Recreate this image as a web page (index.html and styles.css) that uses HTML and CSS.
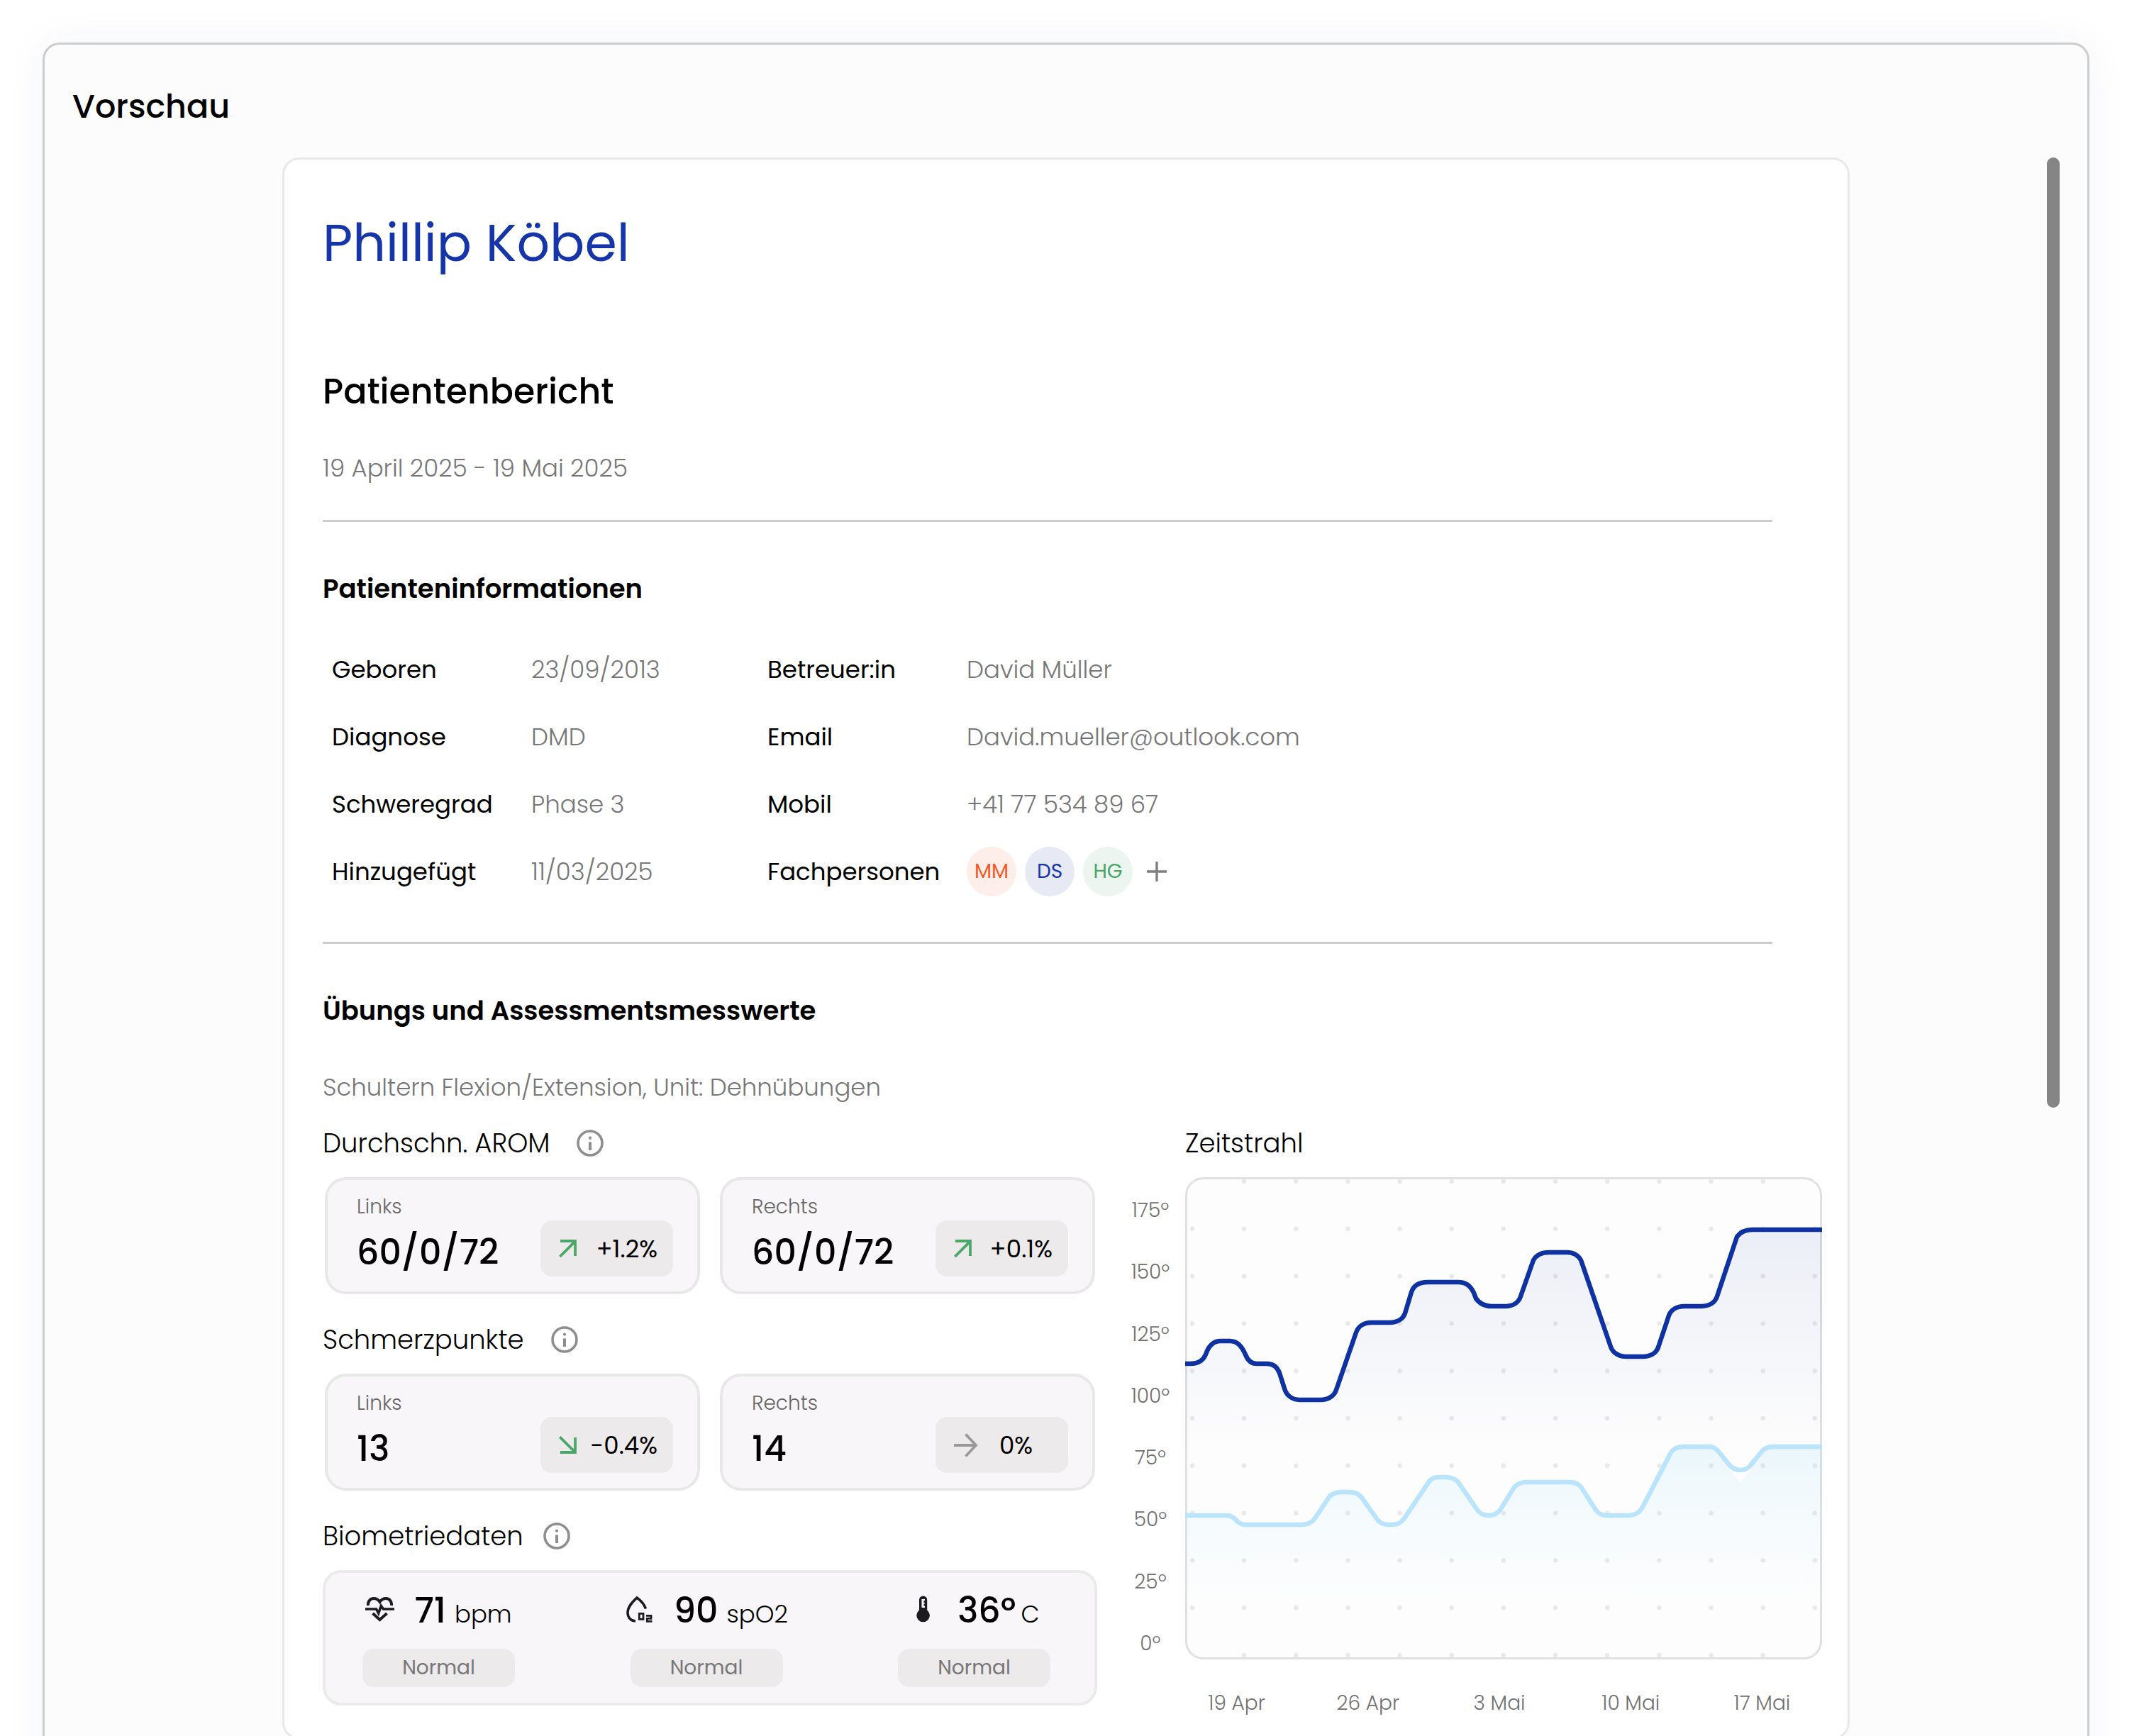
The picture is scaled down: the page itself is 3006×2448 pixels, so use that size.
FILE: index.html
```html
<!DOCTYPE html>
<html lang="de">
<head>
<meta charset="utf-8">
<meta name="viewport" content="width=device-width, initial-scale=1">
<title>Vorschau – Patientenbericht</title>
<link rel="stylesheet" href="styles.css">
</head>
<body>
<svg class="sprite" aria-hidden="true">
  <symbol id="info" viewBox="0 0 38 38"><circle cx="19" cy="19" r="17" fill="none" stroke="currentColor" stroke-width="3.6"/><circle cx="19" cy="11.7" r="2.1" fill="currentColor"/><path d="M19 17.4V29" stroke="currentColor" stroke-width="4"/></symbol>
  <symbol id="up" viewBox="0 0 25 25"><path d="M1.4 24 23 2.4M2 2H23V23" fill="none" stroke="currentColor" stroke-width="3.8"/></symbol>
  <symbol id="down" viewBox="0 0 25 25"><path d="M1.4 1.4 23 23M2 23H23V2" fill="none" stroke="currentColor" stroke-width="3.8"/></symbol>
  <symbol id="flat" viewBox="0 0 34 34"><path d="M0 17H31M16.5 1.5 31 17 16.5 32.5" fill="none" stroke="currentColor" stroke-width="3.8"/></symbol>
</svg>
<main class="frame">
  <h2 class="frame-title">Vorschau</h2>
  <div class="stage">
    <article class="paper">
      <h1 class="name">Phillip Köbel</h1>
      <h2 class="report-title">Patientenbericht</h2>
      <p class="period">19 April 2025 - 19 Mai 2025</p>
      <hr class="rule">
      <section>
        <h3 class="heading">Patienteninformationen</h3>
        <table class="facts">
          <colgroup><col class="c1"><col class="c2"><col class="c1"><col></colgroup>
          <tr><th scope="row">Geboren</th><td>23/09/2013</td><th scope="row">Betreuer:in</th><td>David Müller</td></tr>
          <tr><th scope="row">Diagnose</th><td>DMD</td><th scope="row">Email</th><td>David.mueller@outlook.com</td></tr>
          <tr><th scope="row">Schweregrad</th><td>Phase 3</td><th scope="row">Mobil</th><td>+41 77 534 89 67</td></tr>
          <tr><th scope="row">Hinzugefügt</th><td>11/03/2025</td><th scope="row">Fachpersonen</th><td>
            <div class="team">
              <span class="avatar orange">MM</span><span class="avatar blue">DS</span><span class="avatar green">HG</span>
              <button class="add" type="button" aria-label="Fachperson hinzufügen"><svg width="28" height="28" viewBox="0 0 28 28"><path d="M14 0V28M0 14H28" stroke="currentColor" stroke-width="3.4"/></svg></button>
            </div></td></tr>
        </table>
      </section>
      <hr class="rule rule-low">
      <section>
        <h3 class="heading">Übungs und Assessmentsmesswerte</h3>
        <p class="unit-line">Schultern Flexion/Extension, Unit: Dehnübungen</p>
        <div class="measures">
          <div class="groups">
            <section>
              <h4 class="group-title">Durchschn. AROM <button class="info" type="button" aria-label="Info AROM"><svg width="38" height="38"><use href="#info"/></svg></button></h4>
              <div class="cards">
                <div class="card"><div><div class="side">Links</div><div class="value">60/0/72</div></div><div class="trend"><svg class="good" width="25" height="25"><use href="#up"/></svg>+1.2%</div></div>
                <div class="card"><div><div class="side">Rechts</div><div class="value">60/0/72</div></div><div class="trend"><svg class="good" width="25" height="25"><use href="#up"/></svg>+0.1%</div></div>
              </div>
            </section>
            <section>
              <h4 class="group-title">Schmerzpunkte <button class="info" type="button" aria-label="Info Schmerzpunkte"><svg width="38" height="38"><use href="#info"/></svg></button></h4>
              <div class="cards">
                <div class="card"><div><div class="side">Links</div><div class="value">13</div></div><div class="trend"><svg class="good" width="25" height="25"><use href="#down"/></svg>-0.4%</div></div>
                <div class="card"><div><div class="side">Rechts</div><div class="value">14</div></div><div class="trend steady"><svg class="same" width="34" height="34"><use href="#flat"/></svg>0%</div></div>
              </div>
            </section>
            <section>
              <h4 class="group-title group-title-tight">Biometriedaten <button class="info" type="button" aria-label="Info Biometriedaten"><svg width="38" height="38"><use href="#info"/></svg></button></h4>
              <div class="vitals">
                <div class="vital">
                  <div class="reading">
                    <svg width="41" height="38" viewBox="0 0 41 38" fill="none" stroke="currentColor" stroke-width="4"><path d="M4 14C3.5 7.5 7.5 4 12 4 16 4 18.5 6 20.5 9 22.5 6 25 4 29 4 33.5 4 37.5 7.5 37 14"/><path d="M0 19H15.5L18.7 25 22.3 14.5 25.5 19H41" stroke-width="3.6"/><path d="M10.5 25 20.5 34 30.5 25"/></svg>
                    <span class="amount">71</span><span class="unit">bpm</span>
                  </div>
                  <div class="state">Normal</div>
                </div>
                <div class="vital">
                  <div class="reading">
                    <svg width="41" height="38" viewBox="-2 0 41 38" fill="none" stroke="currentColor" stroke-width="3.6"><path d="M27.5 18.5C25.5 12.5 20.5 7 15 3 8 9.5 2 16 2 24 2 31 6.5 35.5 13 36"/><path d="M18.3 25.3H24V33.3H18.3Z" stroke-width="2.8"/><path d="M28 28.3H35V32.3H29.3V36.3H36.5" stroke-width="2.8"/></svg>
                    <span class="amount">90</span><span class="unit">spO2</span>
                  </div>
                  <div class="state">Normal</div>
                </div>
                <div class="vital">
                  <div class="reading">
                    <svg width="41" height="38" viewBox="0 0 41 38" fill="currentColor"><path d="M15 6A5.6 5.6 0 0 1 26.2 6V20.5A9.3 9.3 0 1 1 15 20.5Z"/><path d="M18.5 5H23V7H21.5V10H23V11.5H21.5V14.5H23V17H18.5Z" fill="#f8f6f8"/></svg>
                    <span class="amount">36º</span><span class="unit near">C</span>
                  </div>
                  <div class="state">Normal</div>
                </div>
              </div>
            </section>
          </div>
          <section class="timeline">
            <h4 class="group-title chart-title">Zeitstrahl</h4>
            <div class="y-axis"><span>175º</span><span>150º</span><span>125º</span><span>100º</span><span>75º</span><span>50º</span><span>25º</span><span>0º</span></div>
            <svg class="chart" viewBox="0 0 898 680" role="img" aria-label="Zeitstrahl">
              <defs>
                <pattern id="dots" x="-26.5" y="-27.4" width="73.15" height="66.8" patternUnits="userSpaceOnUse"><circle cx="36.5" cy="33.4" r="3.2" fill="#e8e8e8"/></pattern>
                <linearGradient id="deep" gradientUnits="userSpaceOnUse" x1="0" y1="74" x2="0" y2="390"><stop offset="0" stop-color="#1535a8" stop-opacity=".075"/><stop offset="1" stop-color="#1535a8" stop-opacity="0"/></linearGradient>
                <linearGradient id="pale" gradientUnits="userSpaceOnUse" x1="0" y1="380" x2="0" y2="600"><stop offset="0" stop-color="#9adcf5" stop-opacity=".18"/><stop offset="1" stop-color="#b9e4fb" stop-opacity="0"/></linearGradient>
                <clipPath id="box"><rect width="898" height="680" rx="25"/></clipPath>
              </defs>
              <rect x="1.5" y="1.5" width="895" height="677" rx="24" fill="#fdfdfd" stroke="#e0e0e0" stroke-width="3"/>
              <g clip-path="url(#box)">
                <rect width="898" height="680" fill="url(#dots)"/>
                <path fill="url(#deep)" d="M0 263H8C20 263 26 257 29 250 33 238 40 231 50 231H63C74 231 80 239 85 250 88 258 93 263 101 263H115C124 263 130 268 133 276L140 298C143 308 151 314 162 314H191C201 314 210 309 213 300L241 219C244 210 252 205 263 205H288C299 205 307 200 310 192L319 162C322 153 330 148 342 148H385C396 148 402 153 407 163L410 171C415 178 422 182 432 182H452C462 182 470 177 473 168L491 117C495 110 503 106 513 106H538C547 106 554 110 558 117L600 239C603 248 612 253 622 253H645C656 253 664 248 667 240L682 195C685 187 693 182 704 182H728C739 182 747 177 750 168L778 84C783 77 790 74 800 74H898V400H0Z"/>
                <path fill="url(#pale)" d="M0 477H58C66 477 70 490 84 490H164C172 490 179 487 183 481L201 454C205 447 212 444 220 444H231C239 444 245 446 249 452L269 480C273 487 279 490 286 490H292C299 490 305 487 309 481L342 432C345 426 350 423 357 423H367C377 423 383 426 387 433L411 468C415 474 420 477 428 477 436 477 441 474 445 468L464 437C468 432 475 430 483 430H541C549 430 555 432 559 438L578 468C582 474 587 477 594 477H625C635 477 640 473 644 467L685 388C689 382 695 380 704 380H737C744 380 749 382 753 388L771 416 783 430 795 416 812 388C816 382 822 380 830 380H898V620H0Z"/>
                <path fill="#fdfdfd" d="M772 415H794L783 430Z"/>
                <path class="line pale" d="M0 477H58C66 477 69 481 72 484 75 487 79 490 84 490H164C172 490 179 487 183 481L201 454C205 447 212 444 220 444H231C239 444 245 446 249 452L269 480C273 487 279 490 286 490H292C299 490 305 487 309 481L342 432C345 426 350 423 357 423H367C377 423 383 426 387 433L411 468C415 474 420 477 428 477 436 477 441 474 445 468L464 437C468 432 475 430 483 430H541C549 430 555 432 559 438L578 468C582 474 587 477 594 477H625C635 477 640 473 644 467L685 388C689 382 695 380 704 380H737C744 380 749 382 753 388L765 403C770 410 776 413 783 413 790 413 795 410 799 404L812 388C816 382 822 380 830 380H898"/>
                <path class="line deep" d="M0 263H8C20 263 26 257 29 250 33 238 40 231 50 231H63C74 231 80 239 85 250 88 258 93 263 101 263H115C124 263 130 268 133 276L140 298C143 308 151 314 162 314H191C201 314 210 309 213 300L241 219C244 210 252 205 263 205H288C299 205 307 200 310 192L319 162C322 153 330 148 342 148H385C396 148 402 153 407 163L410 171C415 178 422 182 432 182H452C462 182 470 177 473 168L491 117C495 110 503 106 513 106H538C547 106 554 110 558 117L600 239C603 248 612 253 622 253H645C656 253 664 248 667 240L682 195C685 187 693 182 704 182H728C739 182 747 177 750 168L778 84C783 77 790 74 800 74H898"/>
              </g>
            </svg>
            <div class="x-axis"><span>19 Apr</span><span>26 Apr</span><span>3 Mai</span><span>10 Mai</span><span>17 Mai</span></div>
          </section>
        </div>
      </section>
    </article>
    <div class="scrollbar"></div>
  </div>
</main>
</body>
</html>
```

FILE: styles.css
```css
*, *::before, *::after { box-sizing: border-box; }

body {
  margin: 0;
  height: 100vh;
  overflow: hidden;
  padding: 60px 60px 0;
  background: #fff;
  color: #000;
  font-family: Poppins, Inter, "Open Sans", sans-serif;
  font-size: 34px;
  line-height: 48px;
}

h1, h2, h3, h4, p { margin: 0; font-weight: 400; }
button { padding: 0; border: 0; background: none; font: inherit; cursor: pointer; }
svg { display: block; flex: none; }
.sprite { position: absolute; width: 0; height: 0; }

.frame {
  padding: 57px 39px 60px;
  border: 3px solid #ccc;
  border-radius: 24px;
  background: #fcfcfc;
  box-shadow: 0 0 60px rgba(30, 50, 160, .05);
}
.frame-title { font-size: 46px; line-height: 60px; font-weight: 500; margin-bottom: 42px; }
.stage { display: grid; grid-template-columns: 1fr minmax(0, 2210px) 1fr; }
.scrollbar { justify-self: end; width: 18px; height: 1340px; border-radius: 9px; background: #858585; }

.paper {
  grid-column: 2;
  padding: 74px 36px 30px 54px;
  border: 3px solid #e8e8e8;
  border-radius: 24px;
  background: #fff;
}
.name { font-size: 73px; line-height: 88px; color: #1535a8; }
.report-title { margin-top: 135px; font-size: 49px; line-height: 60px; font-weight: 500; }
.period { margin-top: 54px; color: #777; font-weight: 300; }
.rule { margin: 49px 70px 0 0; height: 3px; border: 0; background: #ccc; }
.rule-low { margin-top: 52px; }
.heading { margin-top: 70px; font-size: 37px; font-weight: 600; }

.facts { width: 100%; margin-top: 42px; border-collapse: collapse; table-layout: fixed; }
.facts th, .facts td { height: 95px; padding: 0 0 0 13px; text-align: left; white-space: nowrap; }
.facts th { font-weight: 400; }
.facts td { font-weight: 300; color: #777; }
.facts .c1 { width: 281px; }
.facts .c2 { width: 333px; }
.team { display: flex; align-items: center; gap: 12px; }
.avatar { width: 70px; height: 70px; border-radius: 50%; font-size: 28px; line-height: 70px; text-align: center; font-weight: 400; }
.orange { background: #fdeee9; color: #f05a28; }
.blue { background: #e7eaf5; color: #1535a8; }
.green { background: #ecf5f0; color: #4ba564; }
.add { margin-left: 8px; color: #808080; }

.unit-line { margin-top: 60px; color: #777; font-weight: 300; }
.measures { display: grid; grid-template-columns: 1092fr 984fr; column-gap: 38px; margin-top: 31px; }
.groups { display: grid; gap: 40px; align-content: start; }
.group-title { display: flex; align-items: center; gap: 38px; margin-bottom: 24px; font-size: 37px; font-weight: 300; }
.group-title-tight { gap: 28px; }
.info { color: #8e8e90; }

.cards { display: grid; grid-template-columns: 1fr 1fr; gap: 28px; padding: 0 3px; }
.card {
  display: flex;
  justify-content: space-between;
  align-items: flex-end;
  padding: 20px 34px 21px 41px;
  border: 4px solid #e8e8e8;
  border-radius: 30px;
  background: #f8f6f8;
}
.side { font-size: 28px; line-height: 36px; font-weight: 300; color: #666; }
.value { margin-top: 12px; font-size: 49px; line-height: 68px; font-weight: 500; }
.trend {
  display: flex;
  align-items: center;
  justify-content: space-between;
  width: 187px;
  height: 79px;
  padding: 0 22px 0 26px;
  border-radius: 16px;
  background: #eceaeb;
}
.steady { justify-content: flex-start; gap: 30px; }
.good { color: #4ba668; }
.same { color: #999; }

.vitals {
  display: grid;
  grid-template-columns: repeat(3, 215px);
  justify-content: space-between;
  padding: 23px 62px 22px 52px;
  border: 4px solid #ebebeb;
  border-radius: 26px;
  background: #f8f6f8;
}
.reading { display: flex; justify-content: center; align-items: baseline; height: 60px; margin: 0 -20px 24px; line-height: 60px; color: #1d1b20; }
.amount { margin-left: 28px; font-size: 49px; font-weight: 500; color: #000; }
.unit { margin-left: 12px; font-size: 34px; font-weight: 300; color: #000; }
.near { margin-left: 7px; }
.state { border-radius: 16px; background: #eceaeb; color: #777; font-size: 28px; line-height: 54px; text-align: center; }

.timeline { display: grid; grid-template-columns: 74px 1fr; column-gap: 12px; align-content: start; }
.chart-title { grid-column: 2; }
.y-axis { display: flex; flex-direction: column; justify-content: space-between; padding: 29px 0 4px; }
.y-axis, .x-axis { font-size: 28px; line-height: 36px; font-weight: 300; text-align: center; color: #707070; }
.chart { width: 100%; height: auto; }
.line { fill: none; stroke-width: 6.5; }
.deep { stroke: #0f32a3; }
.pale { stroke: #b9e4fb; }
.x-axis { grid-column: 2; display: grid; grid-template-columns: repeat(5, 1fr); margin: 44px -8px 0 -20px; }
```
